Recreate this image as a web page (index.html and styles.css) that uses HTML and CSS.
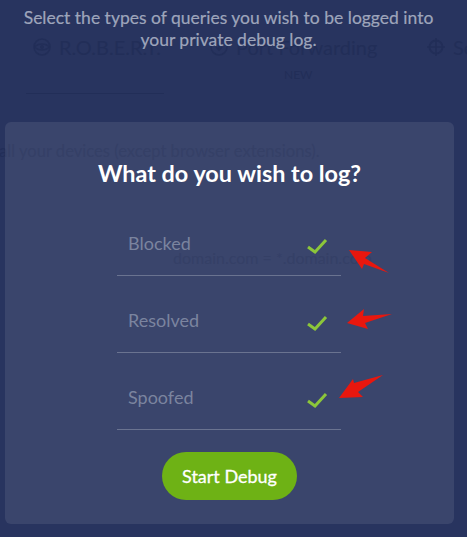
FILE: index.html
```html
<!DOCTYPE html>
<html lang="en">
<head>
<meta charset="utf-8">
<title>Debug log</title>
<link rel="stylesheet" href="styles.css">
</head>
<body>
<div class="page">
  <nav class="tabs">
    <div class="tab tab-robert">
      <svg class="tab-icon" viewBox="0 0 18 18"><circle cx="9" cy="9" r="8" fill="none" stroke="currentColor" stroke-width="1.6"/><path d="M2 9c3-4 11-4 14 0-3 4-11 4-14 0z" fill="none" stroke="currentColor" stroke-width="1.4"/><circle cx="9" cy="9" r="2" fill="currentColor"/></svg>
      <span>R.O.B.E.R.T.</span>
    </div>
    <div class="tab tab-port">
      <svg class="tab-icon" viewBox="0 0 18 18"><circle cx="9" cy="9" r="8" fill="none" stroke="currentColor" stroke-width="1.6"/><path d="M9 3v9M6 9l3 3 3-3" fill="none" stroke="currentColor" stroke-width="1.6"/></svg>
      <span>Port Forwarding</span>
      <small class="tab-new">NEW</small>
    </div>
    <div class="tab tab-sec">
      <svg class="tab-icon" viewBox="0 0 18 18"><circle cx="9" cy="9" r="6.5" fill="none" stroke="currentColor" stroke-width="2"/><path d="M9 0v18M0 9h18" stroke="currentColor" stroke-width="1.6"/></svg>
      <span>Se</span>
    </div>
  </nav>
  <div class="tab-line"></div>
  <p class="ghost-note">all your devices (except browser extensions).</p>
  <p class="ghost-domain">domain.com = *.domain.com</p>
</div>

<div class="overlay">
  <p class="intro">Select the types of queries you wish to be logged into your private debug log.</p>
  <section class="card">
    <h1 class="title">What do you wish to log?</h1>
    <div class="options">
      <div class="option">
        <span class="label">Blocked</span>
        <svg class="check" viewBox="0 0 22 18"><path d="M2 10l7 5L20 3" fill="none" stroke="#8cc63a" stroke-width="3"/></svg>
      </div>
      <div class="option">
        <span class="label">Resolved</span>
        <svg class="check" viewBox="0 0 22 18"><path d="M2 10l7 5L20 3" fill="none" stroke="#8cc63a" stroke-width="3"/></svg>
      </div>
      <div class="option">
        <span class="label">Spoofed</span>
        <svg class="check" viewBox="0 0 22 18"><path d="M2 10l7 5L20 3" fill="none" stroke="#8cc63a" stroke-width="3"/></svg>
      </div>
    </div>
    <button class="start" type="button">Start Debug</button>
  </section>
</div>

<svg class="arrows" viewBox="0 0 467 537" aria-hidden="true">
  <path fill="#e8170e" d="M349 250L372 252L365 258L389 273L364 264L362 269Z"/>
  <path fill="#e8170e" d="M347 323L364 309L363 316L392 314L365 323L368 329Z"/>
  <path fill="#e8170e" d="M339 398L353 379L354 383L383 375L358 392L363 397Z"/>
</svg>
</body>
</html>
```
FILE: styles.css
```css
html, body {
  margin: 0;
  height: 100%;
}

body {
  position: relative;
  width: 467px;
  height: 537px;
  overflow: hidden;
  background: #28345f;
  font-family: Lato, "Open Sans", sans-serif;
}

.page {
  height: 537px;
  overflow: hidden;
  color: #222e58;
  padding-top: 34px;
  box-sizing: border-box;
}

.tabs {
  display: flex;
  padding-left: 33px;
  white-space: nowrap;
  font-size: 20px;
  line-height: 26px;
}

.tab {
  display: flex;
  flex: none;
  align-items: center;
  gap: 8px;
  position: relative;
}

.tab-robert { width: 177px; }
.tab-port { width: 217px; }

.tab-icon {
  width: 18px;
  height: 18px;
  flex: none;
}

.tab-new {
  position: absolute;
  left: 74px;
  top: 34px;
  font-size: 12px;
  line-height: 14px;
}

.tab-line {
  width: 138px;
  height: 1px;
  margin: 33px 0 0 26px;
  background: #222e58;
}

.ghost-note {
  margin: 47px 0 0 -1px;
  font-size: 16.6px;
  line-height: 20px;
  white-space: nowrap;
}

.ghost-domain {
  margin: 87px 0 0 173px;
  font-size: 16px;
  line-height: 20px;
  white-space: nowrap;
}

.overlay {
  position: absolute;
  inset: 0;
  display: flex;
  flex-direction: column;
  align-items: flex-start;
}

.intro {
  width: 420px;
  margin: 7px 0 0 18.5px;
  color: #9ea5bb;
  font-size: 17.5px;
  line-height: 22px;
  text-align: center;
  -webkit-text-stroke: 0.2px #9ea5bb;
}

.card {
  display: flex;
  flex-direction: column;
  align-items: center;
  width: 449px;
  height: 402px;
  margin: 71px 0 0 5px;
  border-radius: 6px;
  background: rgba(255, 255, 255, 0.085);
}

.title {
  margin: 36px 0 0;
  color: #fff;
  font-size: 23.4px;
  font-weight: 700;
  line-height: 30px;
}

.options {
  display: flex;
  flex-direction: column;
  gap: 24px;
  width: 224px;
  margin: 35px 1px 0 0;
}

.option {
  display: flex;
  justify-content: space-between;
  align-items: center;
  height: 52px;
  padding: 0 13px 0 11px;
  border-bottom: 1px solid #6a7390;
}

.label {
  color: #7b849f;
  font-size: 18px;
  line-height: 20px;
  margin-top: -12px;
}

.check {
  width: 22px;
  height: 18px;
  margin-top: -6px;
}

.start {
  width: 135px;
  height: 48px;
  margin-top: 22px;
  border: 0;
  border-radius: 24px;
  background: #6eb215;
  color: #fff;
  font-family: inherit;
  font-size: 18px;
  font-weight: 400;
  padding: 0;
  -webkit-text-stroke: 0.3px #fff;
}

.arrows {
  position: absolute;
  inset: 0;
  width: 467px;
  height: 537px;
  pointer-events: none;
}
```
